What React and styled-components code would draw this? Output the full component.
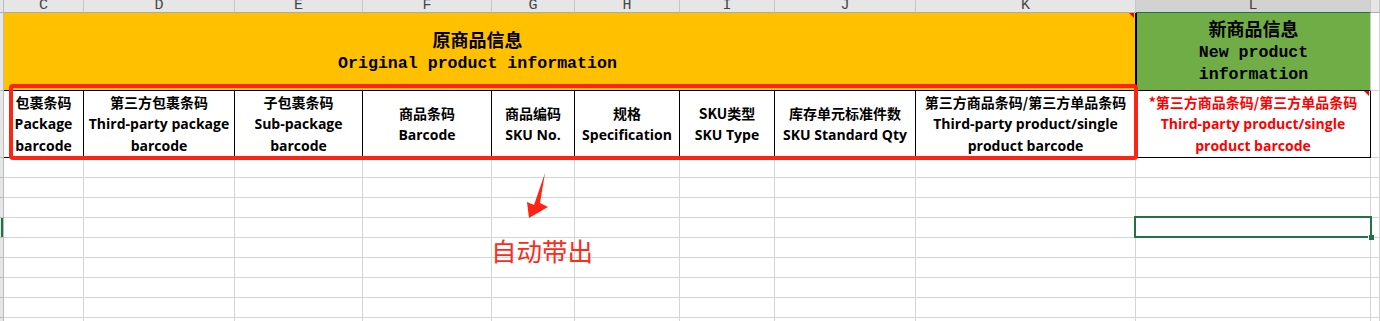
import React from "react";
import styled, { createGlobalStyle, css } from "styled-components";

const GlobalStyle = createGlobalStyle`
  html, body {
    margin: 0;
    padding: 0;
    background: #ffffff;
    overflow: hidden;
  }
`;

// M is only a sliver at the right edge, so its letter sits out of view
const columns = [
  { id: "C", width: 80 },
  { id: "D", width: 151 },
  { id: "E", width: 128 },
  { id: "F", width: 129 },
  { id: "G", width: 83 },
  { id: "H", width: 105 },
  { id: "I", width: 95 },
  { id: "J", width: 141 },
  { id: "K", width: 220 },
  { id: "L", width: 235 },
  { id: "M", width: 9, clipped: true },
];

const fields = [
  { cn: "包裹条码", en: ["Package", "barcode"] },
  { cn: "第三方包裹条码", en: ["Third-party package", "barcode"] },
  { cn: "子包裹条码", en: ["Sub-package", "barcode"] },
  { cn: "商品条码", en: ["Barcode"] },
  { cn: "商品编码", en: ["SKU No."] },
  { cn: "规格", en: ["Specification"] },
  { cn: "SKU类型", en: ["SKU Type"] },
  { cn: "库存单元标准件数", en: ["SKU Standard Qty"] },
  { cn: "第三方商品条码/第三方单品条码", en: ["Third-party product/single", "product barcode"] },
];

const BODY_ROWS = 9;
const ACTIVE_ROW = 3;
const ACTIVE_COL = "L";

const GRID = "#d4d4d4";
const HEAD_BG = "#e6e6e6";
const EXCEL_GREEN = "#217346";

const Sheet = styled.div`
  position: relative;
  width: 1380px;
  height: 321px;
  overflow: hidden;
  display: grid;
  grid-template-columns: 4px ${columns.map((c) => `${c.width}px`).join(" ")};
  grid-template-rows: 13px 78px 67px repeat(${BODY_ROWS}, 20px);
  background: #ffffff;
`;

const Corner = styled.div`
  background: ${HEAD_BG};
  border-right: 1px solid #bcbcbc;
  border-bottom: 1px solid #ababab;
`;

const ColHead = styled.div`
  background: ${(p) => (p.$active ? "#d2d2d2" : HEAD_BG)};
  border-right: 1px solid #c6c6c6;
  border-bottom: 1px solid ${(p) => (p.$active ? EXCEL_GREEN : "#ababab")};
  font-family: "Liberation Mono", monospace;
  font-size: 15px;
  line-height: 12px;
  color: #444444;
  text-align: center;
  overflow: hidden;
  text-indent: ${(p) => (p.$clipped ? "40px" : "0")};
`;

const RowHead = styled.div`
  background: ${HEAD_BG};
  border-right: 1px solid #bcbcbc;
  border-bottom: 1px solid #bdbdbd;
  ${(p) =>
    p.$active &&
    css`
      box-shadow: inset -2px 0 0 ${EXCEL_GREEN};
    `}
`;

const commentMark = css`
  &::after {
    content: "";
    position: absolute;
    top: 0;
    right: 1px;
    border-style: solid;
    border-width: 0 5px 5px 0;
    border-color: transparent #ff0000 transparent transparent;
  }
`;

const TitleCell = styled.div`
  position: relative;
  grid-column: ${(p) => p.$span};
  background: ${(p) => p.$bg};
  border-bottom: 1px solid #000000;
  border-left: ${(p) => (p.$divider ? "1px solid #000000" : "none")};
  border-right: 1px solid ${(p) => (p.$divider ? "#c8c8c8" : "#000000")};
  box-sizing: border-box;
  display: flex;
  flex-direction: column;
  align-items: center;
  justify-content: center;
  gap: ${(p) => p.$gap || 0}px;
  padding-right: ${(p) => p.$shift || 0}px;
  color: #000000;
`;

const TitleCn = styled.div`
  font-family: "Noto Sans CJK SC", sans-serif;
  font-weight: 700;
  font-size: 18px;
  line-height: 22px;
`;

const TitleEn = styled.div`
  font-family: "Liberation Mono", monospace;
  font-weight: 700;
  font-size: 16.6px;
  line-height: ${(p) => p.$lead || 22}px;
  text-align: center;
  white-space: pre-line;
`;

const HeadCell = styled.div`
  position: relative;
  background: #ffffff;
  border-right: 1px solid #000000;
  border-bottom: 1px solid #000000;
  display: flex;
  flex-direction: column;
  align-items: center;
  justify-content: center;
  text-align: center;
  color: ${(p) => (p.$accent ? "#ff0000" : "#000000")};
  ${(p) => p.$note && commentMark}
`;

const HeadCn = styled.div`
  font-family: "Noto Sans CJK SC", sans-serif;
  font-weight: 700;
  font-size: 14px;
  line-height: 21.5px;
  white-space: nowrap;
`;

const HeadEn = styled.div`
  font-family: "Open Sans", "Noto Sans CJK SC", sans-serif;
  font-weight: 700;
  font-size: 14px;
  line-height: 21.5px;
  white-space: nowrap;
`;

const Cell = styled.div`
  position: relative;
  border-right: 1px solid ${GRID};
  border-bottom: 1px solid ${GRID};
`;

const Selection = styled.div`
  position: absolute;
  top: -2px;
  left: -2px;
  right: -2px;
  bottom: -1px;
  border: 2px solid ${EXCEL_GREEN};
  pointer-events: none;
  z-index: 2;

  &::after {
    content: "";
    position: absolute;
    right: -4px;
    bottom: -4px;
    width: 5px;
    height: 5px;
    background: ${EXCEL_GREEN};
    box-shadow: -1px 0 0 #ffffff;
  }
`;

// Comment marker on the top-right of the merged yellow title (column K)
const TitleNote = styled.div`
  position: absolute;
  left: 1129px;
  top: 13px;
  width: 0;
  height: 0;
  border-style: solid;
  border-width: 0 5px 5px 0;
  border-color: transparent #ff0000 transparent transparent;
  z-index: 1;
`;

const Highlight = styled.div`
  position: absolute;
  left: 9px;
  top: 84px;
  width: 1129px;
  height: 76px;
  box-sizing: border-box;
  border: 4px solid #ff2314;
  border-radius: 4px;
  pointer-events: none;
  z-index: 3;
`;

const Pointer = styled.svg`
  position: absolute;
  left: 520px;
  top: 168px;
  width: 35px;
  height: 55px;
  z-index: 3;
`;

const Callout = styled.div`
  position: absolute;
  left: 491px;
  top: 236px;
  font-family: "Noto Sans CJK SC", sans-serif;
  font-weight: 400;
  font-size: 25.5px;
  line-height: 28px;
  color: #ff2a1a;
  white-space: nowrap;
  z-index: 3;
`;

function ColumnHeaders() {
  return (
    <>
      <Corner />
      {columns.map((c) => (
        <ColHead key={c.id} $active={c.id === ACTIVE_COL} $clipped={c.clipped}>
          {c.id}
        </ColHead>
      ))}
    </>
  );
}

function TitleRow() {
  return (
    <>
      <RowHead />
      <TitleCell $span="2 / span 9" $bg="#ffc000" $shift={184} $gap={3}>
        <TitleCn>原商品信息</TitleCn>
        <TitleEn>Original product information</TitleEn>
      </TitleCell>
      <TitleCell $span="11 / span 1" $bg="#70ad47" $gap={3} $divider>
        <TitleCn>新商品信息</TitleCn>
        <TitleEn $lead={22.5}>{"New product\ninformation"}</TitleEn>
      </TitleCell>
      <Cell />
    </>
  );
}

function FieldRow() {
  return (
    <>
      <RowHead />
      {fields.map((f) => (
        <HeadCell key={f.cn}>
          <HeadCn>{f.cn}</HeadCn>
          {f.en.map((line) => (
            <HeadEn key={line}>{line}</HeadEn>
          ))}
        </HeadCell>
      ))}
      <HeadCell $accent $note>
        <HeadCn>*第三方商品条码/第三方单品条码</HeadCn>
        <HeadEn>Third-party product/single</HeadEn>
        <HeadEn>product barcode</HeadEn>
      </HeadCell>
      <Cell />
    </>
  );
}

function BodyRows() {
  return Array.from({ length: BODY_ROWS }, (_, r) => (
    <React.Fragment key={r}>
      <RowHead $active={r === ACTIVE_ROW} />
      {columns.map((c) => (
        <Cell key={c.id}>
          {r === ACTIVE_ROW && c.id === ACTIVE_COL && <Selection />}
        </Cell>
      ))}
    </React.Fragment>
  ));
}

export default function App() {
  return (
    <>
      <GlobalStyle />
      <Sheet>
        <ColumnHeaders />
        <TitleRow />
        <FieldRow />
        <BodyRows />
        <TitleNote />
        <Highlight />
        <Pointer viewBox="0 0 35 55">
          <polygon points="25,5 20,35 28,39 9,50 7,34 14,37" fill="#ff2314" />
        </Pointer>
        <Callout>自动带出</Callout>
      </Sheet>
    </>
  );
}
